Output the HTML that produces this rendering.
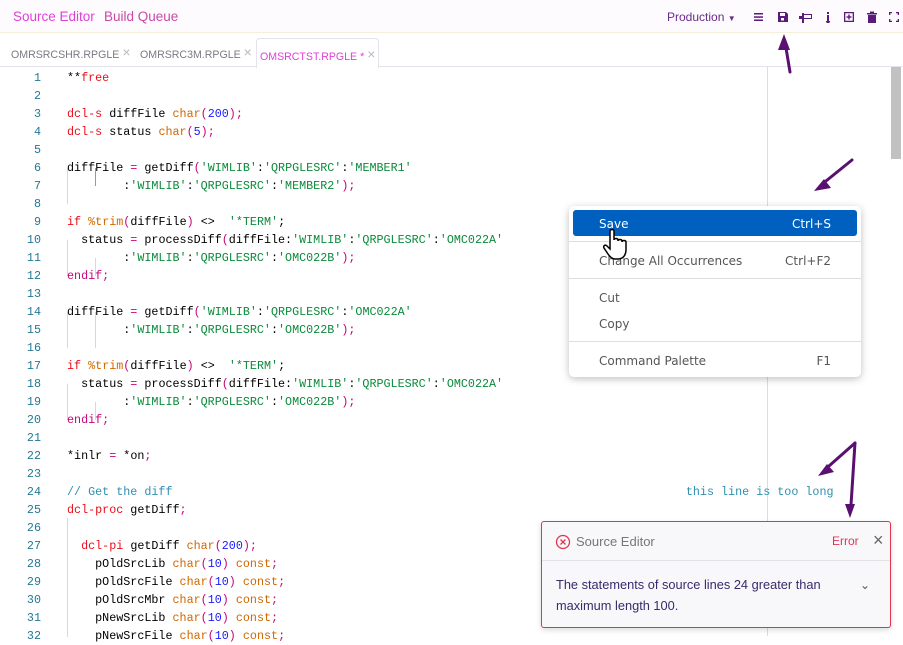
<!DOCTYPE html>
<html><head><meta charset="utf-8"><style>
*{margin:0;padding:0;box-sizing:border-box}
body{width:903px;height:636px;overflow:hidden;background:#fff;font-family:"Liberation Sans",sans-serif;position:relative}
.top{position:absolute;left:0;top:0;width:903px;height:33px;background:#fdfbfd;border-bottom:1px solid #f3efd8}
.top .a{position:absolute;top:9px;font-size:13.5px;color:#e040d8}
.top .b{color:#c84aa8}
.prod{position:absolute;left:667px;top:10px;font-size:12px;color:#6a2a8a}
.tabs{position:absolute;top:33px;left:0;width:903px;height:34px;border-bottom:1px solid #e4e2ea}
.tab{position:absolute;top:12px;font-size:10.6px;color:#7a7a86}
.tab .x{color:#bbb;font-size:14px;margin-left:3px;position:relative;top:-1px}
.tab.act{top:5px;height:30px;border:1px solid #e4e2ea;border-bottom:none;border-radius:4px 4px 0 0;background:#fff;color:#e040d8;padding:8px 3px 0 3px}
.code{position:absolute;top:69px;left:0;font-family:"Liberation Mono",monospace;font-size:11.72px}
.ln{position:absolute;left:0;width:41px;text-align:right;color:#237893;height:18px;line-height:18px}
.l{position:absolute;left:67px;white-space:pre;color:#000;height:18px;line-height:18px}
.k{color:#e8101c}.t{color:#d06800}.n{color:#1a1aff}.s{color:#0a8a3a}.p{color:#c4057b}.c{color:#2f8fb0}
.guide{position:absolute;width:1px;background:#d8d8d8}
.menu{position:absolute;left:569px;top:206px;width:292px;height:171px;background:#fff;border-radius:5px;box-shadow:0 2px 8px rgba(0,0,0,.25);font-family:"DejaVu Sans",sans-serif;font-size:12px;color:#555}
.mi{position:absolute;left:30px;right:30px;height:20px;line-height:20px}
.mi span{position:absolute;right:0}
.sep{position:absolute;left:0;right:0;height:1px;background:#ddd}
.note{position:absolute;left:541px;top:521px;width:350px;height:107px;background:#f8f8fb;border:1px solid #e03450;border-radius:3px;box-shadow:0 2px 6px rgba(0,0,0,.15)}
</style></head><body>
<div class="top">
<div class="a" style="left:13px">Source Editor</div>
<div class="a b" style="left:104px">Build Queue</div>
<div class="prod">Production <span style="font-size:8px">▼</span></div>
<svg style="position:absolute;left:752px;top:10px" width="150" height="14" fill="#5a1a78">
<rect x="2" y="3" width="9" height="1.5"/><rect x="2" y="6.3" width="9" height="1.5"/><rect x="2" y="9.5" width="9" height="1.5"/>
<path d="M26 2h8l2 2v8h-10z M28 3v3h5v-3z"/><rect x="29" y="8" width="3" height="2.5" fill="#fff"/>
<path d="M51 4h9v5h-9z M52 5v3h7v-3z M50 3h2v10h-2z M47 6h3v3h-3z"/>
<rect x="75" y="2" width="2" height="2"/><rect x="75" y="5" width="2" height="8"/><rect x="74" y="11" width="4" height="1.5"/>
<path d="M92 2h10v10h-10z M93.3 3.3v7.4h7.4v-7.4z"/><rect x="94.5" y="6.3" width="5" height="1.4"/><rect x="96.3" y="4.5" width="1.4" height="5"/>
<path d="M115 3h10v1.5h-10z M118 1.5h4v1.5h-4z M116 5h8v8h-8z"/>
<path d="M137 2h3v1.3h-1.7v1.7h-1.3z M144 2h3v3h-1.3v-1.7h-1.7z M137 9h1.3v1.7h1.7v1.3h-3z M145.7 9h1.3v3h-3v-1.3h1.7z"/>
</svg>
</div>
<div class="tabs">
<div class="tab" style="left:11px">OMRSRCSHR.RPGLE<span class="x">×</span></div>
<div class="tab" style="left:140px">OMRSRC3M.RPGLE<span class="x">×</span></div>
<div class="tab act" style="left:256px">OMSRCTST.RPGLE *<span class="x">×</span></div>
</div>
<div style="position:absolute;left:767px;top:67px;width:1px;height:569px;background:#ddd"></div>
<div style="position:absolute;left:891px;top:67px;width:10px;height:92px;background:#c1c1c1"></div>
<div class="guide" style="left:67px;top:168px;height:36px"></div>
<div class="guide" style="left:95px;top:168px;height:18px;background:#999"></div>
<div class="guide" style="left:67px;top:240px;height:36px"></div>
<div class="guide" style="left:95px;top:258px;height:18px"></div>
<div class="guide" style="left:67px;top:312px;height:36px"></div>
<div class="guide" style="left:95px;top:312px;height:36px"></div>
<div class="guide" style="left:67px;top:384px;height:36px"></div>
<div class="guide" style="left:95px;top:402px;height:18px"></div>
<div class="guide" style="left:67px;top:518px;height:119px"></div>
<div class="code" id="code"></div>
<script>
var L=[
'**<span class="k">free</span>','',
'<span class="k">dcl-s</span> diffFile <span class="t">char</span><span class="p">(</span><span class="n">200</span><span class="p">);</span>',
'<span class="k">dcl-s</span> status <span class="t">char</span><span class="p">(</span><span class="n">5</span><span class="p">);</span>','',
'diffFile <span class="p">=</span> getDiff<span class="p">(</span><span class="s">\'WIMLIB\'</span>:<span class="s">\'QRPGLESRC\'</span>:<span class="s">\'MEMBER1\'</span>',
'        :<span class="s">\'WIMLIB\'</span>:<span class="s">\'QRPGLESRC\'</span>:<span class="s">\'MEMBER2\'</span><span class="p">);</span>','',
'<span class="k">if</span> <span class="t">%trim</span><span class="p">(</span>diffFile<span class="p">)</span> &lt;&gt;  <span class="s">\'*TERM\'</span>;',
'  status <span class="p">=</span> processDiff<span class="p">(</span>diffFile:<span class="s">\'WIMLIB\'</span>:<span class="s">\'QRPGLESRC\'</span>:<span class="s">\'OMC022A\'</span>',
'        :<span class="s">\'WIMLIB\'</span>:<span class="s">\'QRPGLESRC\'</span>:<span class="s">\'OMC022B\'</span><span class="p">);</span>',
'<span class="p">endif;</span>','',
'diffFile <span class="p">=</span> getDiff<span class="p">(</span><span class="s">\'WIMLIB\'</span>:<span class="s">\'QRPGLESRC\'</span>:<span class="s">\'OMC022A\'</span>',
'        :<span class="s">\'WIMLIB\'</span>:<span class="s">\'QRPGLESRC\'</span>:<span class="s">\'OMC022B\'</span><span class="p">);</span>','',
'<span class="k">if</span> <span class="t">%trim</span><span class="p">(</span>diffFile<span class="p">)</span> &lt;&gt;  <span class="s">\'*TERM\'</span>;',
'  status <span class="p">=</span> processDiff<span class="p">(</span>diffFile:<span class="s">\'WIMLIB\'</span>:<span class="s">\'QRPGLESRC\'</span>:<span class="s">\'OMC022A\'</span>',
'        :<span class="s">\'WIMLIB\'</span>:<span class="s">\'QRPGLESRC\'</span>:<span class="s">\'OMC022B\'</span><span class="p">);</span>',
'<span class="p">endif;</span>','',
'*inlr <span class="p">=</span> *on<span class="p">;</span>','',
'<span class="c">// Get the diff'+' '.repeat(73)+'this line is too long</span>',
'<span class="k">dcl-proc</span> getDiff<span class="p">;</span>','',
'  <span class="k">dcl-pi</span> getDiff <span class="t">char</span><span class="p">(</span><span class="n">200</span><span class="p">);</span>',
'    pOldSrcLib <span class="t">char</span><span class="p">(</span><span class="n">10</span><span class="p">)</span> <span class="t">const</span><span class="p">;</span>',
'    pOldSrcFile <span class="t">char</span><span class="p">(</span><span class="n">10</span><span class="p">)</span> <span class="t">const</span><span class="p">;</span>',
'    pOldSrcMbr <span class="t">char</span><span class="p">(</span><span class="n">10</span><span class="p">)</span> <span class="t">const</span><span class="p">;</span>',
'    pNewSrcLib <span class="t">char</span><span class="p">(</span><span class="n">10</span><span class="p">)</span> <span class="t">const</span><span class="p">;</span>',
'    pNewSrcFile <span class="t">char</span><span class="p">(</span><span class="n">10</span><span class="p">)</span> <span class="t">const</span><span class="p">;</span>'];
var h='';for(var i=0;i<L.length;i++){h+='<div class="ln" style="top:'+(i*18)+'px">'+(i+1)+'</div><div class="l" style="top:'+(i*18)+'px">'+L[i]+'</div>';}
document.getElementById('code').innerHTML=h;
</script>
<div class="menu">
<div style="position:absolute;left:4px;top:4px;width:284px;height:26px;background:#0060c0;border-radius:3px"></div>
<div class="mi" style="top:8px;color:#fff">Save<span>Ctrl+S</span></div>
<div class="sep" style="top:35px"></div>
<div class="mi" style="top:45px">Change All Occurrences<span>Ctrl+F2</span></div>
<div class="sep" style="top:72px"></div>
<div class="mi" style="top:82px">Cut</div>
<div class="mi" style="top:108px">Copy</div>
<div class="sep" style="top:135px"></div>
<div class="mi" style="top:145px">Command Palette<span>F1</span></div>
</div>
<svg style="position:absolute;left:600px;top:228px" width="32" height="36"><path d="M10 3c0-2 4-2 4 0v9c0-2 4-2 4 0v1c0-2 4-2 4 0v1c0-2 4-2 4 0v8c0 5-3 9-8 9h-3c-3 0-5-2-7-5l-4-6c-1-2 1-4 3-2l3 3z" fill="#fff" stroke="#000" stroke-width="1.5"/></svg>
<div class="note">
<svg style="position:absolute;left:13px;top:12px" width="16" height="16"><circle cx="8" cy="8" r="6.5" fill="none" stroke="#e03450" stroke-width="1.3"/><path d="M5.5 5.5l5 5M10.5 5.5l-5 5" stroke="#e03450" stroke-width="1.3"/></svg>
<div style="position:absolute;left:34px;top:12px;font-size:13px;color:#777">Source Editor</div>
<div style="position:absolute;left:290px;top:12px;font-size:12px;color:#e03450">Error</div>
<div style="position:absolute;left:331px;top:8px;font-size:18px;color:#666">×</div>
<div style="position:absolute;left:0;right:0;top:38px;height:1px;background:#e2e2e6"></div>
<div style="position:absolute;left:14px;top:52px;width:290px;font-size:12.8px;line-height:21px;color:#3a2a6a">The statements of source lines 24 greater than maximum length 100.</div>
<div style="position:absolute;left:318px;top:56px;font-size:12px;color:#555">⌄</div>
</div>
<svg style="position:absolute;left:0;top:0" width="903" height="636" fill="none" stroke="#5a1070" stroke-width="3" stroke-linecap="round">
<path d="M790 72L786 48"/><path d="M784 34l-6 16h12z" fill="#5a1070" stroke="none"/>
<path d="M852 160L826 181"/><path d="M814 191l17-3-7-9z" fill="#5a1070" stroke="none"/>
<path d="M855 443L829 466"/><path d="M818 476l16-4-7-8z" fill="#5a1070" stroke="none"/>
<path d="M855 443L851 505"/><path d="M850 518l-5-14h10z" fill="#5a1070" stroke="none"/>
</svg>
</body></html>
